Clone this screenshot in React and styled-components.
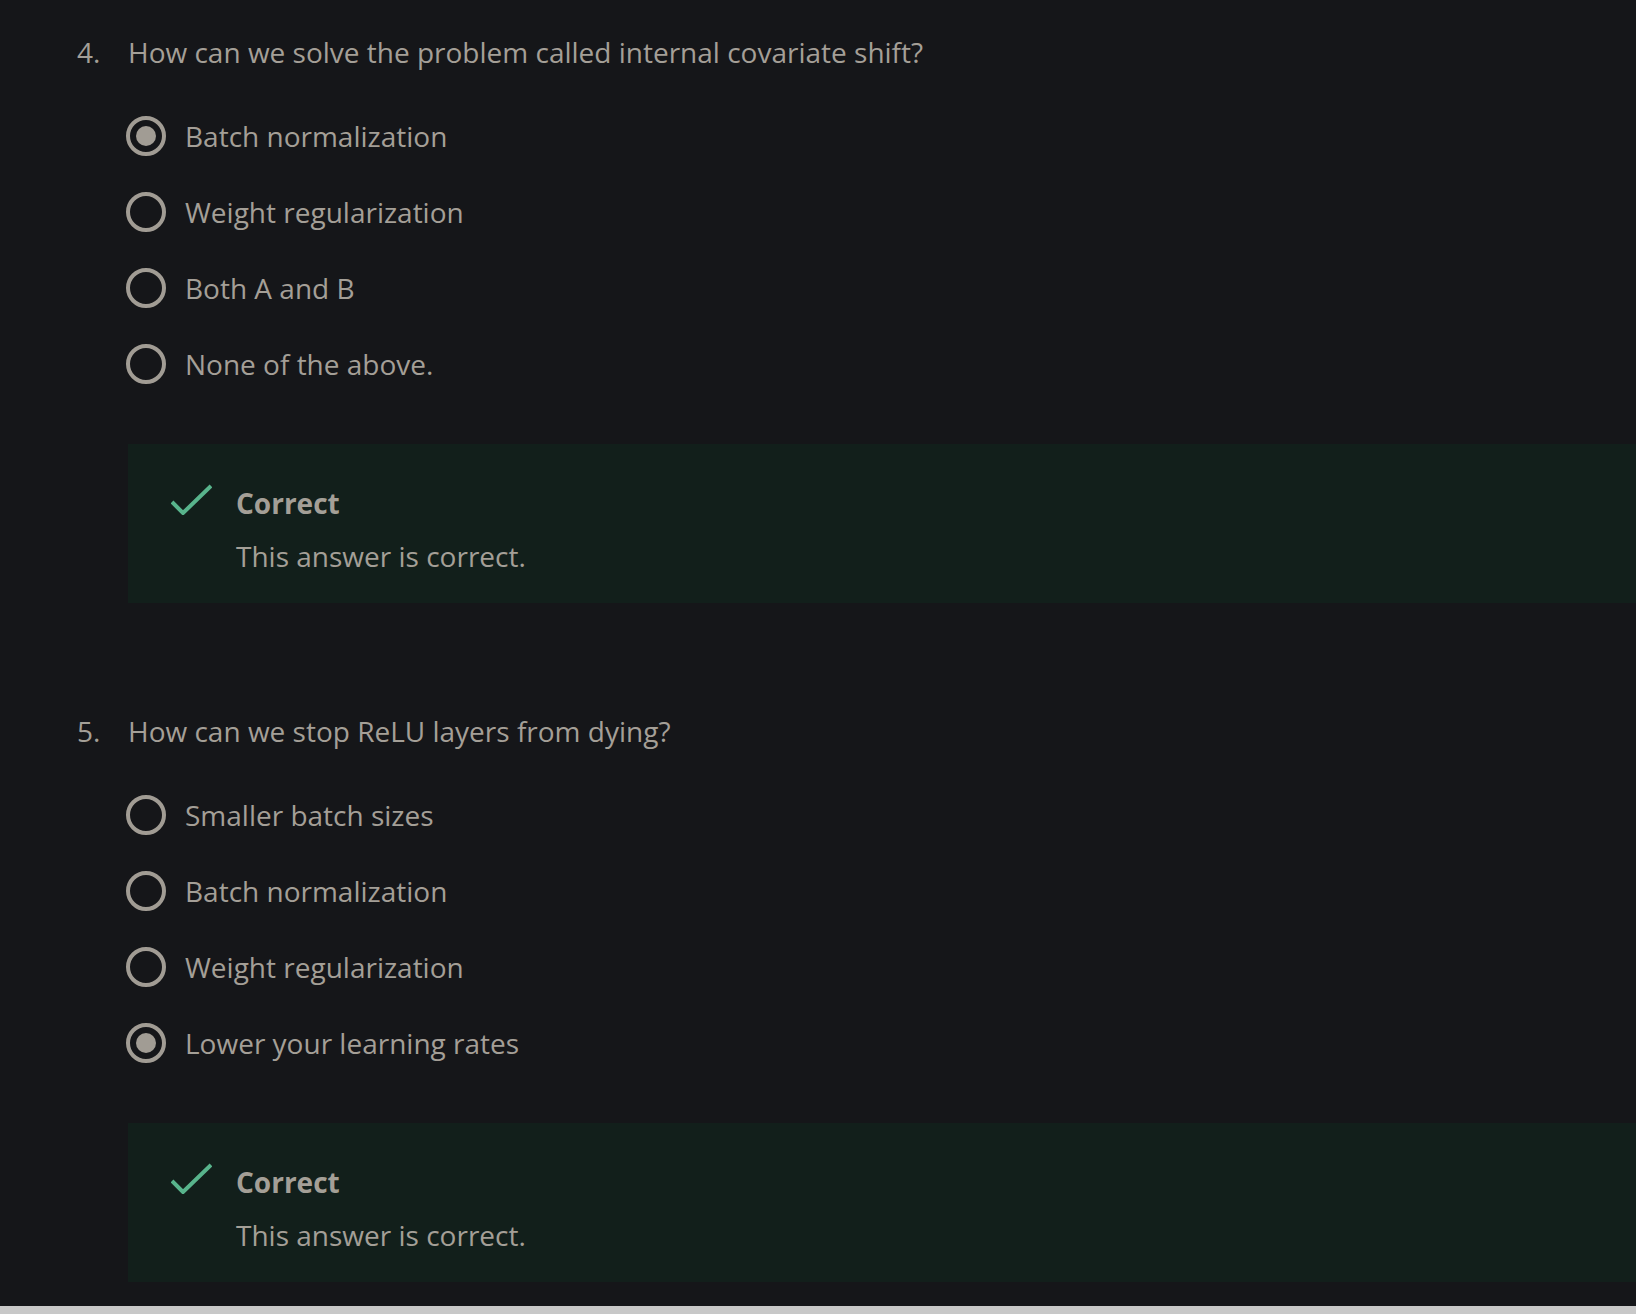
import React from "react";
import styled, { createGlobalStyle } from "styled-components";

const GlobalStyle = createGlobalStyle`
  html, body {
    margin: 0;
    padding: 0;
    background: #151619;
    overflow: hidden;
  }
  body {
    font-family: "Open Sans", "Noto Sans", sans-serif;
    color: #a49f97;
  }
`;

const questions = [
  {
    number: 4,
    text: "How can we solve the problem called internal covariate shift?",
    options: [
      "Batch normalization",
      "Weight regularization",
      "Both A and B",
      "None of the above.",
    ],
    selected: 0,
  },
  {
    number: 5,
    text: "How can we stop ReLU layers from dying?",
    options: [
      "Smaller batch sizes",
      "Batch normalization",
      "Weight regularization",
      "Lower your learning rates",
    ],
    selected: 3,
  },
];

const Page = styled.div`
  height: 100vh;
  display: flex;
  flex-direction: column;
`;

const Content = styled.ol`
  flex: 1;
  margin: 0;
  padding: 32px 0 0 77px;
  list-style: none;
  overflow: hidden;
  display: flex;
  flex-direction: column;
  gap: 108px;
`;

const Footer = styled.div`
  height: 8px;
  background: #c8c8c8;
  flex-shrink: 0;
`;

const Question = styled.li`
  display: flex;
  flex-direction: column;
`;

const QuestionRow = styled.div`
  display: flex;
  font-size: 28px;
  line-height: 40px;
`;

const Number = styled.span`
  width: 51px;
  flex-shrink: 0;
`;

const Options = styled.div`
  display: flex;
  flex-direction: column;
  gap: 36px;
  margin: 44px 0 60px 49px;
`;

const Option = styled.label`
  display: flex;
  align-items: center;
  gap: 19px;
  height: 40px;
  font-size: 28px;
  cursor: pointer;
`;

const Radio = styled.span`
  width: 40px;
  height: 40px;
  box-sizing: border-box;
  border: 4px solid #a19c94;
  border-radius: 50%;
  display: flex;
  align-items: center;
  justify-content: center;
  flex-shrink: 0;

  &::after {
    content: "";
    width: 20px;
    height: 20px;
    border-radius: 50%;
    background: ${(p) => (p.$checked ? "#a19c94" : "transparent")};
  }
`;

const Feedback = styled.div`
  margin-left: 51px;
  margin-right: -40px;
  background: #121f1b;
  padding: 39px 0 27px 43px;
  display: flex;
  gap: 24px;
`;

const Check = styled.svg`
  width: 41px;
  height: 31px;
  margin-top: 1px;
  flex-shrink: 0;
`;

const FeedbackText = styled.div`
  display: flex;
  flex-direction: column;
  gap: 13px;
`;

const Title = styled.div`
  font-size: 28px;
  font-weight: 700;
  line-height: 40px;
`;

const Body = styled.div`
  font-size: 28px;
  line-height: 40px;
`;

const App = () => (
  <Page>
    <GlobalStyle />
    <Content>
      {questions.map((q) => (
        <Question key={q.number}>
          <QuestionRow>
            <Number>{q.number}.</Number>
            <span>{q.text}</span>
          </QuestionRow>
          <Options>
            {q.options.map((opt, i) => (
              <Option key={opt}>
                <Radio $checked={i === q.selected} />
                {opt}
              </Option>
            ))}
          </Options>
          <Feedback>
            <Check viewBox="0 0 41 31">
              <polyline
                points="1,18 12,29 40,2"
                fill="none"
                stroke="#58b48c"
                strokeWidth="4"
              />
            </Check>
            <FeedbackText>
              <Title>Correct</Title>
              <Body>This answer is correct.</Body>
            </FeedbackText>
          </Feedback>
        </Question>
      ))}
    </Content>
    <Footer />
  </Page>
);

export default App;
